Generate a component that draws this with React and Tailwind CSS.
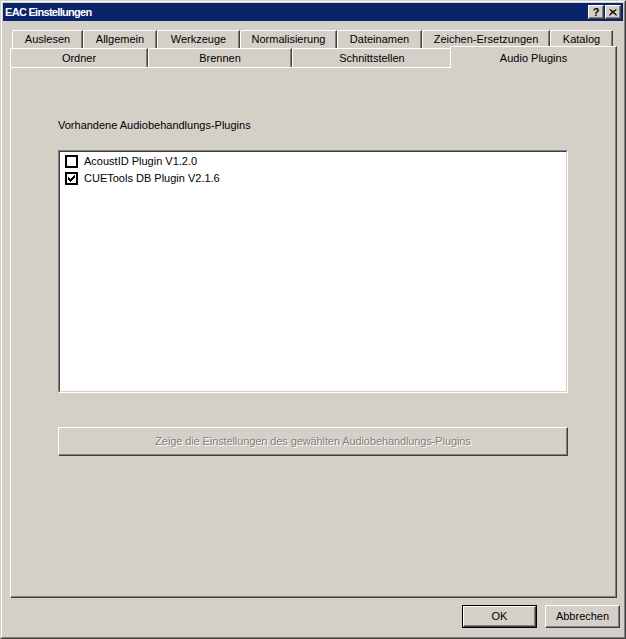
import React from "react";

const row1 = [
  ["Auslesen", 71],
  ["Allgemein", 74],
  ["Werkzeuge", 83],
  ["Normalisierung", 97],
  ["Dateinamen", 85],
  ["Zeichen-Ersetzungen", 128],
  ["Katalog", 63],
];

const row2 = [
  ["Ordner", 138],
  ["Brennen", 144],
  ["Schnittstellen", 160],
];

const plugins = [
  { name: "AcoustID Plugin V1.2.0", checked: false },
  { name: "CUETools DB Plugin V2.1.6", checked: true },
];

const font = { fontFamily: '"Liberation Sans", Arial, sans-serif' };

function TitleButton({ children }) {
  return (
    <div className="w-[16px] h-[14px] bg-[#d4d0c8] border-t border-l border-white border-r border-b border-r-[#404040] border-b-[#404040] shadow-[inset_-1px_-1px_#808080] flex items-center justify-center text-black">
      {children}
    </div>
  );
}

function Tab({ label, width, h }) {
  return (
    <div
      className={`${h} shrink-0 flex items-center justify-center border-t border-l border-r border-white border-r-[#404040] rounded-tl-[2px] shadow-[inset_-1px_0_#808080] text-[11px] leading-[13px] text-black`}
      style={{ width }}
    >
      {label}
    </div>
  );
}

function CheckBox({ checked }) {
  return (
    <div className="w-[13px] h-[13px] border-2 border-black bg-white shrink-0 flex items-center justify-center">
      {checked && (
        <svg width="9" height="9" viewBox="0 0 9 9">
          <path d="M1.5 3.5 L3.5 5.5 L7.5 1.5 M1.5 4.5 L3.5 6.5 L7.5 2.5 M1.5 5.5 L3.5 7.5 L7.5 3.5" stroke="black" strokeWidth="1" fill="none" shapeRendering="crispEdges" />
        </svg>
      )}
    </div>
  );
}

export default function App() {
  return (
    <div
      className="w-[626px] h-[639px] bg-[#d4d0c8] border border-[#d4d0c8] border-r-[#404040] border-b-[#404040]"
      style={font}
    >
      <div className="h-full border border-white border-r-[#808080] border-b-[#808080] p-[1px] flex flex-col">
        {/* Title bar */}
        <div className="h-[18px] bg-[#0a246a] flex items-center justify-between pl-[2px] pr-[2px] shrink-0">
          <span className="text-white font-bold text-[11px] leading-[13px] tracking-[-0.7px]">
            EAC Einstellungen
          </span>
          <div className="flex items-center gap-[1px]">
            <TitleButton>
              <span className="text-[11px] font-bold leading-none">?</span>
            </TitleButton>
            <TitleButton>
              <svg width="8" height="7" viewBox="0 0 8 7">
                <path d="M0.5 0.5 L7.5 6.5 M7.5 0.5 L0.5 6.5 M1.5 0.5 L7.5 5.5 M6.5 0.5 L0.5 5.5" stroke="black" strokeWidth="1" fill="none" />
              </svg>
            </TitleButton>
          </div>
        </div>

        {/* Body */}
        <div className="flex-1 flex flex-col pl-[7px] pr-[6px] pt-[9px]">
          {/* Tabs */}
          <div className="flex ml-[2px] h-[18px]">
            {row1.map(([label, w]) => (
              <Tab key={label} label={label} width={w} h="h-[18px]" />
            ))}
          </div>
          <div className="flex items-start h-[19px]">
            {row2.map(([label, w]) => (
              <Tab key={label} label={label} width={w} h="h-[19px]" />
            ))}
            <div className="relative z-10 w-[167px] h-[22px] -mt-[2px] -ml-[2px] bg-[#d4d0c8] border-t border-l border-r border-white border-r-[#404040] rounded-tl-[2px] shadow-[inset_-1px_0_#808080] flex justify-center pt-[5px] text-[11px] leading-[13px] text-black">
              Audio Plugins
            </div>
          </div>

          {/* Panel */}
          <div className="h-[531px] border border-white border-r-[#404040] border-b-[#404040] shadow-[inset_-1px_-1px_#808080] flex flex-col pl-[47px]">
            <div className="mt-[51px] text-[11px] leading-[13px] text-black">
              Vorhandene Audiobehandlungs-Plugins
            </div>
            <div className="mt-[18px] w-[510px] h-[243px] border border-[#808080] border-r-white border-b-white">
              <div className="h-full bg-white border border-[#404040] border-r-[#d4d0c8] border-b-[#d4d0c8] pt-[1px]">
                {plugins.map((p) => (
                  <div key={p.name} className="h-[17px] flex items-center pl-[5px] gap-[6px]">
                    <CheckBox checked={p.checked} />
                    <span className="text-[11px] leading-[13px] text-black">{p.name}</span>
                  </div>
                ))}
              </div>
            </div>
            <div className="mt-[34px] w-[510px] h-[29px] border border-white border-r-[#404040] border-b-[#404040] shadow-[inset_-1px_-1px_#808080] flex items-center justify-center text-[11px] leading-[13px] tracking-[-0.1px] text-[#808080] [text-shadow:1px_1px_0_#fff]">
              Zeige die Einstellungen des gewählten Audiobehandlungs-Plugins
            </div>
          </div>

          {/* Buttons */}
          <div className="flex justify-end gap-[8px] mt-[7px] -mr-[3px]">
            <div className="w-[75px] h-[23px] border border-black">
              <div className="h-full border border-white border-r-[#404040] border-b-[#404040] shadow-[inset_-1px_-1px_#808080] flex items-center justify-center text-[11px] leading-[13px] text-black">
                OK
              </div>
            </div>
            <div className="w-[75px] h-[23px] border border-white border-r-[#404040] border-b-[#404040] shadow-[inset_-1px_-1px_#808080] flex items-center justify-center text-[11px] leading-[13px] text-black">
              Abbrechen
            </div>
          </div>
        </div>
      </div>
    </div>
  );
}
